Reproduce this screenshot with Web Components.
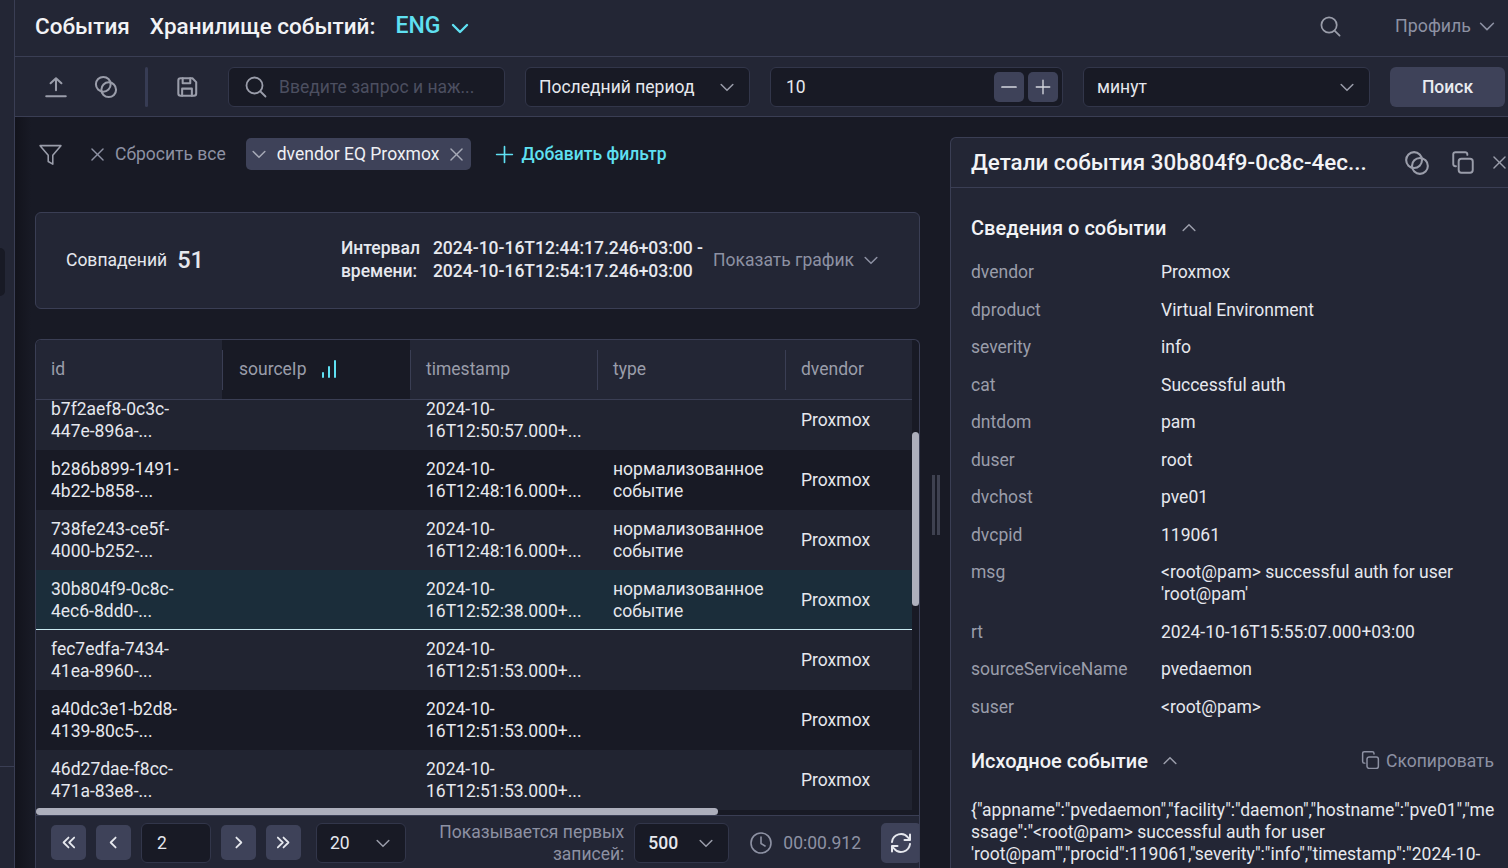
<!DOCTYPE html>
<html lang="ru">
<head>
<meta charset="utf-8">
<title>События</title>
<style>
  html, body { margin: 0; height: 100%; overflow: hidden; background: #181a25; }
  body { font: 17.5px/22px Roboto, "Liberation Sans", sans-serif; color: #e6e8ee; }
</style>
</head>
<body>
<siem-app></siem-app>
<script>
const ICONS = {
  upload: '<path d="M12 15V4M7 8.5 12 4l5 4.5M3 20.5h18"/>',
  circles: '<circle cx="9.5" cy="9.5" r="6.8"/><circle cx="14.5" cy="14.5" r="6.8"/>',
  save: '<path d="M4 6a2 2 0 0 1 2-2h11l3.5 3.5V18a2 2 0 0 1-2 2H6a2 2 0 0 1-2-2z"/><path d="M8 4v4.5h7V4M7.5 20v-6.5h9V20"/>',
  search: '<circle cx="10.5" cy="10.5" r="8"/><path d="m16.5 16.5 5 5"/>',
  filter: '<path d="M2 3.5h20l-7.8 9.2v8.6l-4.4-2.6v-6z"/>',
  close: '<path d="m5 5 14 14M19 5 5 19"/>',
  down: '<path d="m5 9 7 7 7-7"/>',
  up: '<path d="m5 15 7-7 7 7"/>',
  plus: '<path d="M12 3v18M3 12h18"/>',
  minus: '<path d="M5 12h14"/>',
  left: '<path d="m15 5-7 7 7 7"/>',
  right: '<path d="m9 5 7 7-7 7"/>',
  first: '<path d="m12 5-7 7 7 7M20 5l-7 7 7 7"/>',
  last: '<path d="m4 5 7 7-7 7M12 5l7 7-7 7"/>',
  copy: '<rect x="8" y="8" width="13" height="13" rx="2.5"/><path d="M16 4.5V4a2 2 0 0 0-2-2H5a2 2 0 0 0-2 2v9a2 2 0 0 0 2 2h.5"/>',
  clock: '<circle cx="12" cy="12" r="10"/><path d="M12 6v6.5l4 2.5"/>',
  refresh: '<path d="M3 11a9 9 0 0 1 16-4.5L21 9M21 3.5V9h-5.5M21 13a9 9 0 0 1-16 4.5L3 15M3 20.5V15h5.5"/>'
};

class SiemIcon extends HTMLElement {
  connectedCallback() {
    const size = this.getAttribute('size') || 24;
    const sw = this.getAttribute('stroke') || 2;
    this.attachShadow({ mode: 'open' }).innerHTML = `
      <style>:host{display:inline-flex;flex:none;width:${size}px;height:${size}px;color:inherit}svg{display:block}</style>
      <svg width="${size}" height="${size}" viewBox="0 0 24 24" fill="none" stroke="currentColor" stroke-width="${sw}" stroke-linecap="round" stroke-linejoin="round">${ICONS[this.getAttribute('name')]}</svg>`;
  }
}
customElements.define('siem-icon', SiemIcon);

// field with dark background, used for inputs and selects
class SiemField extends HTMLElement {
  constructor() {
    super();
    this.attachShadow({ mode: 'open' }).innerHTML = `
      <style>
        :host { display: flex; align-items: center; box-sizing: border-box; height: 40px; background: #181a25; border: 1px solid #32364a; border-radius: 6px; padding: 0 10px 0 13px; color: #e6e8ee; }
        .text { flex: 1; white-space: nowrap; overflow: hidden; }
      </style>
      <div class="text"><slot></slot></div><slot name="end"></slot>`;
  }
}
customElements.define('siem-field', SiemField);

class SiemButton extends HTMLElement {
  constructor() {
    super();
    this.attachShadow({ mode: 'open' }).innerHTML = `
      <style>
        :host { display: inline-flex; flex: none; align-items: center; justify-content: center; box-sizing: border-box; width: 35px; height: 35px; background: #3e4259; border-radius: 5px; color: #e6e8ee; }
      </style><slot></slot>`;
  }
}
customElements.define('siem-button', SiemButton);

class SiemHeader extends HTMLElement {
  constructor() {
    super();
    this.attachShadow({ mode: 'open' }).innerHTML = `
      <style>
        :host { display: flex; align-items: center; box-sizing: border-box; height: 57px; padding: 0 10px 4px 20px; background: #232635; border-bottom: 1px solid #3a3e54; }
        .t { font-size: 22.5px; font-weight: 500; color: #f2f3f6; white-space: nowrap; }
        .store { margin-left: 20px; }
        .eng { margin-left: 20px; color: #5fe0f2; font-size: 23px; }
        .chev { color: #5fe0f2; margin-left: 8px; margin-top: 3px; }
        .sp { flex: 1; }
        .search { color: #9a9daa; margin-right: 53px; }
        .profile { color: #8d91a3; font-size: 17.8px; }
        .pchev { color: #8d91a3; margin-left: 5px; }
      </style>
      <span class="t">События</span>
      <span class="t store">Хранилище событий:</span>
      <span class="t eng">ENG</span>
      <siem-icon class="chev" name="down" size="24" stroke="2.4"></siem-icon>
      <span class="sp"></span>
      <siem-icon class="search" name="search" size="23" stroke="1.8"></siem-icon>
      <span class="profile">Профиль</span>
      <siem-icon class="pchev" name="down" size="22" stroke="1.7"></siem-icon>`;
  }
}
customElements.define('siem-header', SiemHeader);

class SiemToolbar extends HTMLElement {
  constructor() {
    super();
    this.attachShadow({ mode: 'open' }).innerHTML = `
      <style>
        :host { display: flex; align-items: center; box-sizing: border-box; height: 60px; padding: 0 3px 0 28px; background: #232635; border-bottom: 1px solid #3a3e54; color: #9a9daa; }
        .sep { flex: none; width: 3px; height: 40px; background: #373c54; border-radius: 2px; margin: 0 26px 0 26px; }
        .q { width: 277px; margin-left: 28px; padding-left: 15px; color: #4c4f60; }
        .q siem-icon { color: #9a9daa; }
        .qt { margin-left: 11px; white-space: nowrap; }
        .row { display: flex; align-items: center; }
        siem-field { flex: none; }
        .period { width: 225px; margin-left: 20px; }
        .num { width: 293px; margin-left: 20px; padding-right: 4px; padding-left: 15px; }
        .unit { width: 287px; margin-left: 20px; }
        .num siem-button { width: 30px; height: 30px; color: #d5d7df; }
        .num siem-button + siem-button { margin-left: 4px; }
        .btn { width: 115px; height: 40px; margin-left: 20px; background: #3e4259; border-radius: 6px; display: flex; align-items: center; justify-content: center; color: #e9ebf0; font-weight: 500; flex: none; }
        .chev { color: #9a9daa; margin-right: 2px; }
      </style>
      <siem-icon name="upload" size="26" stroke="1.9" style="margin-right:24px"></siem-icon>
      <siem-icon name="circles" size="26" stroke="1.9"></siem-icon>
      <div class="sep"></div>
      <siem-icon name="save" size="26" stroke="1.9"></siem-icon>
      <siem-field class="q"><div class="row"><siem-icon name="search" size="24" stroke="1.8"></siem-icon><span class="qt">Введите запрос и наж...</span></div></siem-field>
      <siem-field class="period">Последний период<siem-icon class="chev" slot="end" name="down" size="20" stroke="1.8"></siem-icon></siem-field>
      <siem-field class="num">10<siem-button slot="end"><siem-icon name="minus" size="24" stroke="1.7"></siem-icon></siem-button><siem-button slot="end"><siem-icon name="plus" size="18" stroke="1.8"></siem-icon></siem-button></siem-field>
      <siem-field class="unit">минут<siem-icon class="chev" slot="end" name="down" size="20" stroke="1.8"></siem-icon></siem-field>
      <div class="btn">Поиск</div>`;
  }
}
customElements.define('siem-toolbar', SiemToolbar);

class SiemFilters extends HTMLElement {
  constructor() {
    super();
    this.attachShadow({ mode: 'open' }).innerHTML = `
      <style>
        :host { display: flex; align-items: center; height: 34px; padding-left: 3px; color: #8d91a3; white-space: nowrap; }
        .reset { margin-left: 8px; }
        .tag { display: flex; align-items: center; height: 32px; box-sizing: border-box; margin-left: 20px; padding: 0 5px 0 3px; background: #3e4259; border-radius: 5px; color: #eef0f4; }
        .tag span { margin: 0 8px 0 8px; }
        .tag siem-icon { color: #a6a9b6; }
        .add { color: #5fe0f2; font-weight: 500; margin-left: 6px; }
        .plus { color: #5fe0f2; margin-left: 23px; }
      </style>
      <siem-icon name="filter" size="25" stroke="1.5" style="color:#9a9daa;margin-right:25px"></siem-icon>
      <siem-icon name="close" size="19" stroke="1.8"></siem-icon>
      <span class="reset">Сбросить все</span>
      <div class="tag"><siem-icon name="down" size="20" stroke="1.8"></siem-icon><span>dvendor EQ Proxmox</span><siem-icon name="close" size="19" stroke="1.8"></siem-icon></div>
      <siem-icon class="plus" name="plus" size="21" stroke="1.9"></siem-icon>
      <span class="add">Добавить фильтр</span>`;
  }
}
customElements.define('siem-filters', SiemFilters);

class SiemSummary extends HTMLElement {
  constructor() {
    super();
    this.attachShadow({ mode: 'open' }).innerHTML = `
      <style>
        :host { display: flex; align-items: center; box-sizing: border-box; height: 97px; padding: 0 38px 2px 30px; background: #232635; border: 1px solid #3a3e54; border-radius: 6px; white-space: nowrap; }
        .num { font-size: 23.5px; font-weight: 500; margin-left: 10px; }
        .sp { flex: 1; }
        .grid { display: grid; grid-template-columns: auto auto; column-gap: 13px; row-gap: 1px; font-weight: 500; }
        .more { color: #8d91a3; margin-left: 10px; }
        .chev { color: #8d91a3; margin-left: 7px; }
      </style>
      <span>Совпадений</span><span class="num">51</span><span class="sp"></span>
      <div class="grid"><span>Интервал</span><span>2024-10-16T12:44:17.246+03:00 -</span><span>времени:</span><span>2024-10-16T12:54:17.246+03:00</span></div>
      <span class="more">Показать график</span><siem-icon class="chev" name="down" size="20" stroke="1.8"></siem-icon>`;
  }
}
customElements.define('siem-summary', SiemSummary);

const ROWS = [
  ['b7f2aef8-0c3c-<br>447e-896a-...', '2024-10-<br>16T12:50:57.000+...', ''],
  ['b286b899-1491-<br>4b22-b858-...', '2024-10-<br>16T12:48:16.000+...', 'нормализованное<br>событие'],
  ['738fe243-ce5f-<br>4000-b252-...', '2024-10-<br>16T12:48:16.000+...', 'нормализованное<br>событие'],
  ['30b804f9-0c8c-<br>4ec6-8dd0-...', '2024-10-<br>16T12:52:38.000+...', 'нормализованное<br>событие'],
  ['fec7edfa-7434-<br>41ea-8960-...', '2024-10-<br>16T12:51:53.000+...', ''],
  ['a40dc3e1-b2d8-<br>4139-80c5-...', '2024-10-<br>16T12:51:53.000+...', ''],
  ['46d27dae-f8cc-<br>471a-83e8-...', '2024-10-<br>16T12:51:53.000+...', '']
];

class SiemTable extends HTMLElement {
  constructor() {
    super();
    const cols = 'grid-template-columns: 186px 188px 187px 188px 127px;';
    const rows = ROWS.map((r, i) => `
      <div class="tr ${i % 2 ? 'odd' : ''} ${i === 3 ? 'sel' : ''}">
        <div>${r[0]}</div><div></div><div>${r[1]}</div><div>${r[2]}</div><div>Proxmox</div>
      </div>`).join('');
    this.attachShadow({ mode: 'open' }).innerHTML = `
      <style>
        :host { display: flex; flex-direction: column; position: relative; box-sizing: border-box; flex: 1; min-height: 0; background: #181a25; border: 1px solid #3a3e54; border-bottom: 0; border-radius: 6px 6px 0 0; overflow: hidden; }
        .head, .tr { display: grid; ${cols} width: 876px; }
        .head { height: 60px; flex: none; box-sizing: border-box; background: #232635; border-bottom: 1px solid #3a3e54; color: #9a9daa; }
        .th { display: flex; align-items: center; box-sizing: border-box; padding: 0 0 2px 16px; position: relative; height: 59px; }
        .th:first-child { padding-left: 15px; }
        .th + .th::before { content: ''; position: absolute; left: 0; top: 10px; height: 40px; width: 1px; background: #3a3e54; }
        .th.sorted { background: #181a25; padding-left: 17px; }
        .bars { margin-left: 15px; }
        .body { flex: 1; min-height: 0; overflow: hidden; }
        .body .tr:first-child { margin-top: -10px; }
        .tr { height: 60px; box-sizing: border-box; background: #212431; align-items: center; }
        .tr > div { padding-left: 15px; }
        .tr > div:nth-child(3), .tr > div:nth-child(4) { padding-left: 16px; }
        .tr > div:nth-child(5) { padding-left: 16px; }
        .tr.odd { background: #181a25; }
        .tr.sel { background: #1b2d3a; border-bottom: 1px solid #c9eaf0; }
        .hbar { position: absolute; left: 0; bottom: 0; width: 682px; height: 7px; border-radius: 4px; background: #adafbc; }
        .vbar { position: absolute; right: 0; top: 92px; width: 7px; height: 174px; border-radius: 4px; background: #adafbc; }
      </style>
      <div class="head">
        <div class="th">id</div>
        <div class="th sorted">sourceIp<svg class="bars" width="16" height="18" viewBox="0 0 16 18" fill="none" stroke="#5fe0f2" stroke-width="2" stroke-linecap="round"><path d="M2 17v-4M8 17V7M14 17V1"/></svg></div>
        <div class="th">timestamp</div>
        <div class="th">type</div>
        <div class="th">dvendor</div>
      </div>
      <div class="body">${rows}</div>
      <div class="hbar"></div>
      <div class="vbar"></div>`;
  }
}
customElements.define('siem-table', SiemTable);

class SiemPager extends HTMLElement {
  constructor() {
    super();
    this.attachShadow({ mode: 'open' }).innerHTML = `
      <style>
        :host { display: flex; align-items: center; box-sizing: border-box; height: 53px; flex: none; padding: 1px 0 0 15px; background: #232635; border-left: 1px solid #3a3e54; border-right: 1px solid #3a3e54; border-top: 1px solid #3a3e54; overflow: hidden; white-space: nowrap; }
        siem-field { flex: none; height: 40px; }
        siem-button { margin-right: 10px; }
        .page { width: 70px; margin-right: 10px; padding-left: 15px; }
        .size { width: 90px; margin-left: 5px; padding-left: 13px; }
        .limit { width: 95px; padding-left: 13px; font-weight: 500; }
        .chev { color: #9a9daa; margin-right: 2px; }
        .note { color: #8d91a3; text-align: right; flex: 1; line-height: 22px; white-space: normal; margin: 0 10px 0 22px; }
        .time { color: #8d91a3; display: flex; align-items: center; margin: 0 20px 0 20px; }
        .time siem-icon { margin-right: 10px; }
        .re { width: 40px; height: 40px; margin-right: -2px; }
      </style>
      <siem-button><siem-icon name="first" size="17" stroke="2.5"></siem-icon></siem-button>
      <siem-button><siem-icon name="left" size="17" stroke="2.5"></siem-icon></siem-button>
      <siem-field class="page">2</siem-field>
      <siem-button><siem-icon name="right" size="17" stroke="2.5"></siem-icon></siem-button>
      <siem-button><siem-icon name="last" size="17" stroke="2.5"></siem-icon></siem-button>
      <siem-field class="size">20<siem-icon class="chev" slot="end" name="down" size="20" stroke="1.8"></siem-icon></siem-field>
      <div class="note">Показывается первых записей:</div>
      <siem-field class="limit">500<siem-icon class="chev" slot="end" name="down" size="20" stroke="1.8"></siem-icon></siem-field>
      <div class="time"><siem-icon name="clock" size="24" stroke="1.6"></siem-icon>00:00.912</div>
      <siem-button class="re"><siem-icon name="refresh" size="24" stroke="2"></siem-icon></siem-button>`;
  }
}
customElements.define('siem-pager', SiemPager);

const DETAILS = [
  ['dvendor', 'Proxmox'], ['dproduct', 'Virtual Environment'], ['severity', 'info'],
  ['cat', 'Successful auth'], ['dntdom', 'pam'], ['duser', 'root'], ['dvchost', 'pve01'],
  ['dvcpid', '119061'], ['msg', "&lt;root@pam&gt; successful auth for user<br>'root@pam'"],
  ['rt', '2024-10-16T15:55:07.000+03:00'], ['sourceServiceName', 'pvedaemon'], ['suser', '&lt;root@pam&gt;']
];

class SiemDetails extends HTMLElement {
  constructor() {
    super();
    const rows = DETAILS.map(d => `<div class="k">${d[0]}</div><div class="v">${d[1]}</div>`).join('');
    this.attachShadow({ mode: 'open' }).innerHTML = `
      <style>
        :host { display: block; box-sizing: border-box; width: 558px; flex: none; background: #232635; border: 1px solid #3a3e54; border-right: 0; border-bottom: 0; border-radius: 6px 0 0 0; overflow: hidden; white-space: nowrap; padding: 0 20px; }
        .top { display: flex; align-items: center; height: 49px; margin-right: -20px; }
        .title { font-size: 22.4px; font-weight: 500; width: 396px; color: #f2f3f6; padding-bottom: 2px; }
        .top siem-icon { color: #9a9daa; }
        .rule { height: 1px; background: #3a3e54; margin: 0 -20px; }
        .sec { display: flex; align-items: center; font-size: 20px; font-weight: 500; color: #f2f3f6; }
        .sec siem-icon { margin-left: 12px; color: #9a9daa; }
        .first { margin-top: 29px; }
        .first siem-icon { margin-left: 13px; }
        .grid { display: grid; grid-template-columns: 190px 1fr; row-gap: 15.5px; margin-top: 22px; }
        .k { color: #9a9daa; }
        .v { color: #e6e8ee; }
        .src { margin-top: 32px; }
        .sp { flex: 1; }
        .copy { display: flex; align-items: center; color: #8d91a3; font-size: 17.5px; font-weight: 400; margin-right: -6px; }
        .copy siem-icon { margin: 0 5px 0 0; color: #8d91a3; }
        .raw { margin-top: 27px; overflow-wrap: break-word; white-space: normal; width: 526px; }
      </style>
      <div class="top">
        <div class="title">Детали события 30b804f9-0c8c-4ec...</div>
        <siem-icon name="circles" size="28" stroke="1.8" style="margin-left:36px"></siem-icon>
        <siem-icon name="copy" size="26" stroke="1.8" style="margin-left:19px"></siem-icon>
        <siem-icon name="close" size="19" stroke="1.8" style="margin-left:14px"></siem-icon>
      </div>
      <div class="rule"></div>
      <div class="sec first">Сведения о событии<siem-icon name="up" size="20" stroke="1.8"></siem-icon></div>
      <div class="grid">${rows}</div>
      <div class="sec src">Исходное событие<siem-icon name="up" size="20" stroke="1.8"></siem-icon><span class="sp"></span><span class="copy"><siem-icon name="copy" size="21" stroke="1.7"></siem-icon>Скопировать</span></div>
      <div class="raw">{"appname":"pvedaemon","facility":"daemon","hostname":"pve01","message":"&lt;root@pam&gt; successful auth for user 'root@pam'","procid":119061,"severity":"info","timestamp":"2024-10-</div>`;
  }
}
customElements.define('siem-details', SiemDetails);

class SiemApp extends HTMLElement {
  constructor() {
    super();
    this.attachShadow({ mode: 'open' }).innerHTML = `
      <style>
        :host { display: flex; height: 868px; width: 1508px; overflow: hidden; }
        .side { position: relative; flex: none; box-sizing: border-box; width: 15px; background: #232635; border-right: 1px solid #3a3e54; display: flex; flex-direction: column; }
        .grow { flex: 1; }
        .tab { position: absolute; left: 0; top: 248px; width: 5px; height: 48px; background: #181a25; border-radius: 0 6px 6px 0; }
        .foot { height: 101px; border-top: 1px solid #3a3e54; }
        .main { flex: 1; min-width: 0; display: flex; flex-direction: column; }
        .content { flex: 1; min-height: 0; display: flex; background: linear-gradient(90deg, #12131c 0, #181a25 16px); padding-left: 20px; }
        .left { flex: none; width: 885px; display: flex; flex-direction: column; padding-top: 20px; }
        siem-summary { margin-top: 41px; }
        siem-table { margin-top: 30px; }
        .grip { flex: none; width: 30px; position: relative; }
        .grip i { position: absolute; left: 12px; top: 358px; width: 8px; height: 60px; border-left: 3px solid #3e4150; border-right: 3px solid #3e4150; box-sizing: border-box; }
        siem-details { margin-top: 20px; }
      </style>
      <div class="side"><div class="tab"></div><div class="grow"></div><div class="foot"></div></div>
      <div class="main">
        <siem-header></siem-header>
        <siem-toolbar></siem-toolbar>
        <div class="content">
          <div class="left">
            <siem-filters></siem-filters>
            <siem-summary></siem-summary>
            <siem-table></siem-table>
            <siem-pager></siem-pager>
          </div>
          <div class="grip"><i></i></div>
          <siem-details></siem-details>
        </div>
      </div>`;
  }
}
customElements.define('siem-app', SiemApp);
</script>
</body>
</html>
